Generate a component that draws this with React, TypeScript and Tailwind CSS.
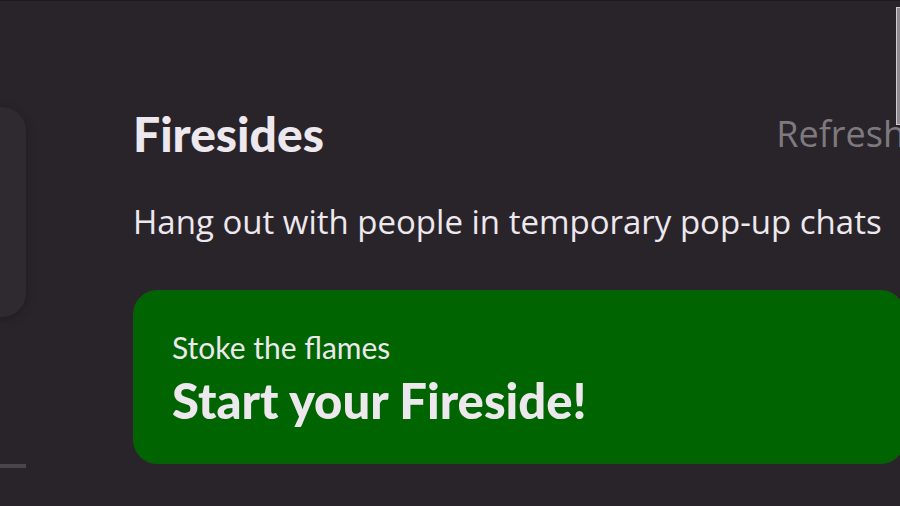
import React from "react";

export default function App() {
  return (
    <div className="relative w-[900px] h-[506px] overflow-hidden bg-[#29242a] border-t border-[#1c181c]">
      <div className="flex w-[1000px]">
        <div className="w-[26px] shrink-0 flex flex-col">
          <div className="mt-[106px] ml-[-40px] w-[66px] h-[210px] rounded-[24px] bg-[#2f2a30] shadow-[0_2px_10px_rgba(0,0,0,0.25)]" />
          <div className="mt-[147px] h-[4px] w-[26px] bg-[#4a454b]" />
        </div>
        <div className="ml-[107px] w-[772px] shrink-0 flex flex-col">
          <div className="mt-[104px] flex items-start justify-between w-[772px]">
            <h1 className="text-[48px] leading-[58px] font-black text-[#ede8ee] [font-family:Lato,sans-serif]">
              Firesides
            </h1>
            <span className="text-[36px] leading-[58px] text-[#7e797f] whitespace-nowrap [font-family:'Open_Sans',Lato,sans-serif]">
              Refresh
            </span>
          </div>
          <p className="mt-[39px] text-[33px] leading-[40px] text-[#ede8ee] whitespace-nowrap [font-family:'Open_Sans',Lato,sans-serif]">
            Hang out with people in temporary pop-up chats
          </p>
          <div className="mt-[48px] w-[772px] h-[174px] rounded-[24px] bg-[#006400] border border-[#0f5c10] pl-[38px] pt-[38px] [font-family:Lato,sans-serif]">
            <div className="text-[30px] leading-[36px] text-[#ede8ee]">Stoke the flames</div>
            <div className="mt-[6px] text-[49px] leading-[59px] font-black text-[#ede8ee]">
              Start your Fireside!
            </div>
          </div>
        </div>
      </div>
      <div className="absolute right-[-4px] top-[6px] w-[8px] h-[118px] border border-[#d0cbd1] bg-[#8f8a90]" />
    </div>
  );
}
